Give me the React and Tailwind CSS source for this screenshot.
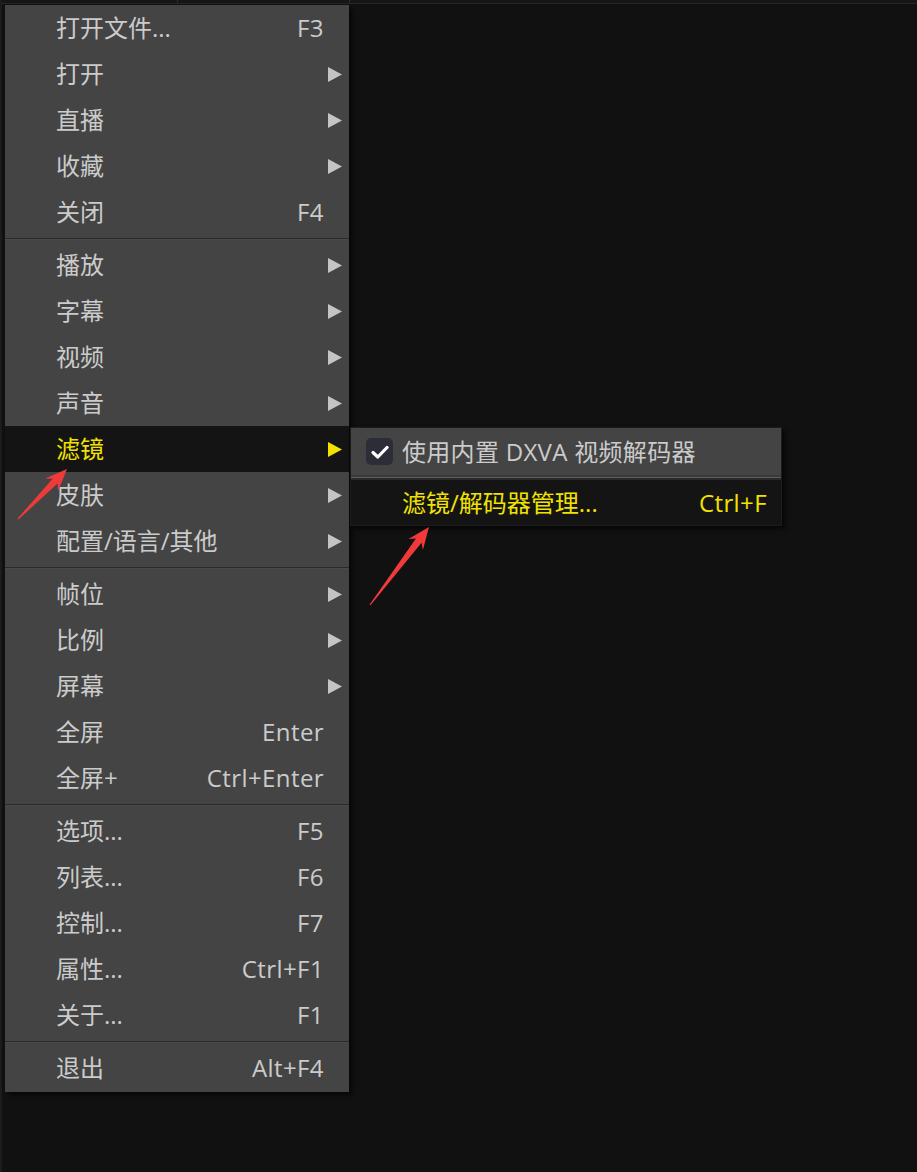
import React from 'react'

const FONT = { fontFamily: '"Open Sans", "Noto Sans CJK SC", sans-serif' }

const groups = [
  [
    { label: '打开文件...', key: 'F3' },
    { label: '打开', sub: true },
    { label: '直播', sub: true },
    { label: '收藏', sub: true },
    { label: '关闭', key: 'F4' },
  ],
  [
    { label: '播放', sub: true },
    { label: '字幕', sub: true },
    { label: '视频', sub: true },
    { label: '声音', sub: true },
    { label: '滤镜', sub: true, active: true },
    { label: '皮肤', sub: true },
    { label: '配置/语言/其他', sub: true },
  ],
  [
    { label: '帧位', sub: true },
    { label: '比例', sub: true },
    { label: '屏幕', sub: true },
    { label: '全屏', key: 'Enter' },
    { label: '全屏+', key: 'Ctrl+Enter' },
  ],
  [
    { label: '选项...', key: 'F5' },
    { label: '列表...', key: 'F6' },
    { label: '控制...', key: 'F7' },
    { label: '属性...', key: 'Ctrl+F1' },
    { label: '关于...', key: 'F1' },
  ],
  [{ label: '退出', key: 'Alt+F4' }],
]

function SubArrow({ active }) {
  return (
    <svg width="14" height="15" viewBox="0 0 14 15" className="mr-[7px]">
      <polygon points="0,0 14,7.5 0,15" fill={active ? '#f2e200' : '#c4c4c4'} />
    </svg>
  )
}

function MenuRow({ item }) {
  return (
    <div
      className={`flex h-[46px] items-center pl-[51px] text-[24px] ${
        item.active ? 'bg-[#141414] text-[#f2e200]' : 'text-[#cbcbcb]'
      }`}
    >
      <span className="flex-1">{item.label}</span>
      {item.sub ? (
        <SubArrow active={item.active} />
      ) : (
        <span className="mr-[25px] tracking-[0.4px]">{item.key}</span>
      )}
    </div>
  )
}

function Separator() {
  return (
    <div className="flex h-[7px] flex-col justify-center">
      <div className="h-px bg-[#2a2a2a]" />
      <div className="h-px bg-[#4a4a4a]" />
    </div>
  )
}

// red annotation arrow, tail -> tip
function arrowPoints(tx, ty, hx, hy) {
  const len = Math.hypot(hx - tx, hy - ty)
  const dx = (hx - tx) / len
  const dy = (hy - ty) / len
  const nx = -dy
  const ny = dx
  const headLen = 22
  const headW = 9
  const shaftW = 3.5
  const bx = hx - dx * headLen
  const by = hy - dy * headLen
  const sx = hx - dx * (headLen - 5)
  const sy = hy - dy * (headLen - 5)
  const p = [
    [tx + nx * 0.6, ty + ny * 0.6],
    [sx + nx * shaftW, sy + ny * shaftW],
    [bx + nx * headW, by + ny * headW],
    [hx, hy],
    [bx - nx * headW, by - ny * headW],
    [sx - nx * shaftW, sy - ny * shaftW],
    [tx - nx * 0.6, ty - ny * 0.6],
  ]
  return p.map((q) => q.join(',')).join(' ')
}

export default function App() {
  return (
    <div className="relative h-[1172px] w-[917px] overflow-hidden bg-[#111111]" style={FONT}>
      {/* top strip of the window */}
      <div className="flex h-[4px] border-b border-[#262626] bg-[#161616]">
        <div className="w-[178px] border-r border-[#2a2a2a]" />
        <div className="w-[172px] border-r border-[#2a2a2a]" />
      </div>
      <div className="absolute left-0 top-0 h-full w-[2px] bg-[#1c1c1c]" />

      {/* main popup menu */}
      <div className="absolute left-[5px] top-[5px] w-[344px] bg-[#444444] pb-[1px] shadow-[3px_3px_4px_rgba(0,0,0,0.6)]">
        {groups.map((g, gi) => (
          <div key={gi}>
            {gi > 0 && <Separator />}
            {g.map((item) => (
              <MenuRow key={item.label} item={item} />
            ))}
          </div>
        ))}
      </div>

      {/* filter submenu */}
      <div className="absolute left-[350px] top-[427px] w-[432px] border border-[#1c1c1c] bg-[#444444] shadow-[3px_3px_4px_rgba(0,0,0,0.6)]">
        <div className="flex h-[47px] items-center text-[24px] text-[#cbcbcb]">
          <div className="ml-[15px] mr-[9px] flex h-[27px] w-[27px] items-center justify-center rounded-[5px] bg-[#2d2d38]">
            <svg width="18" height="14" viewBox="0 0 18 14">
              <path d="M2 7.5 L6.8 12 L16 2.5" fill="none" stroke="#ffffff" strokeWidth="3.2" strokeLinecap="round" strokeLinejoin="round" />
            </svg>
          </div>
          <span className="tracking-[0.3px]">使用内置 DXVA 视频解码器</span>
        </div>
        <div className="flex h-[5px] flex-col">
          <div className="h-[2px] bg-[#3a3a3a]" />
          <div className="h-px bg-[#5e5e5e]" />
          <div className="h-[2px] bg-[#2a2a2a]" />
        </div>
        <div className="flex h-[45px] items-center bg-[#141414] pl-[51px] text-[24px] text-[#f2e200]">
          <span className="flex-1">滤镜/解码器管理...</span>
          <span className="mr-[14px] tracking-[0.4px]">Ctrl+F</span>
        </div>
      </div>

      {/* red annotation arrows */}
      <svg className="pointer-events-none absolute left-0 top-0" width="917" height="1172">
        <polygon points={arrowPoints(18, 519, 67, 469)} fill="#f03a3a" />
        <polygon points={arrowPoints(370, 605, 429, 527)} fill="#f03a3a" />
      </svg>
    </div>
  )
}
